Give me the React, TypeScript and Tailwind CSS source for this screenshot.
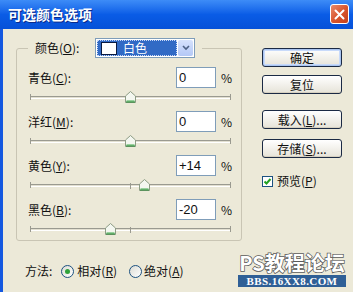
import React from 'react';

const FONT = '[font-family:"Noto_Sans_CJK_SC","Noto_Sans",sans-serif]';

interface SliderRowProps {
  name: string;
  hotkey: string;
  value: number;
  last?: boolean;
}

const Thumb: React.FC = () => (
  <svg width="11" height="12" viewBox="0 0 11 12">
    <path d="M5.5 0.5 L10.5 5 L10.5 11.5 L0.5 11.5 L0.5 5 Z" fill="#f4f7f0" stroke="#8c9c84" />
    <path d="M1.5 9.5 L9.5 9.5 L9.5 10.5 L1.5 10.5 Z" fill="#3fa84a" />
    <path d="M1 11 L10 11" stroke="#2a8a36" />
  </svg>
);

const SliderRow: React.FC<SliderRowProps> = ({ name, hotkey, value, last }) => {
  const text = value > 0 ? `+${value}` : `${value}`;
  return (
    <div className="flex flex-col">
      <div className="flex items-center h-[21px]">
        <span className="w-[148px] text-[12px] text-[#111]">
          {name}(<u>{hotkey}</u>):
        </span>
        <div className="w-[40px] h-[21px] bg-white border border-[#7f9db9] flex items-center pl-[2px] text-[13px] text-[#111] [font-family:Arial,'Liberation_Sans',sans-serif]">
          {text}
        </div>
        <span className="ml-[5px] text-[12px] text-[#111]">%</span>
      </div>
      <div className={`relative ml-[2px] w-[201px] ${last ? 'h-[20px]' : 'h-[23px]'}`}>
        <div className="absolute left-0 right-0 top-[8px] h-[3px] border-t border-[#9a9a90] border-b border-b-white bg-[#e2dfd0]" />
        <div className="absolute left-0 top-[6px] w-px h-[6px] bg-[#9a9a90]" />
        <div className="absolute right-0 top-[6px] w-px h-[6px] bg-[#9a9a90]" />
        {value !== 0 && <div className="absolute left-[100px] top-[7px] w-px h-[6px] bg-[#9a9a90]" />}
        <div className="absolute top-[3px]" style={{ left: 100 + value - 5 }}>
          <Thumb />
        </div>
      </div>
    </div>
  );
};

const XpButton: React.FC<{ children: React.ReactNode; primary?: boolean; className?: string }> = ({ children, primary, className }) => (
  <button
    className={`w-[80px] h-[19px] rounded-[3px] border border-[#1b2a44] bg-gradient-to-b from-white to-[#e6e3d8] flex items-center justify-center text-[12px] text-[#111] leading-none ${
      primary ? 'shadow-[inset_0_0_0_1px_#a9c4f0,inset_0_0_0_2px_#c8dafa]' : 'shadow-[inset_0_-1px_0_#d6d0c0]'
    } ${className ?? ''}`}
  >
    {children}
  </button>
);

const Radio: React.FC<{ checked?: boolean }> = ({ checked }) => (
  <span className="w-[13px] h-[13px] rounded-full border border-[#1c5180] bg-gradient-to-br from-[#dcdcd4] to-white flex items-center justify-center">
    {checked && <span className="w-[5px] h-[5px] rounded-full bg-[#2fa23a]" />}
  </span>
);

export default function App() {
  return (
    <div className={`w-[353px] h-[292px] overflow-hidden relative flex flex-col bg-[#ece9d8] ${FONT}`}>
      {/* title bar */}
      <div className="h-[29px] shrink-0 flex items-center justify-between pl-[8px] pr-[4px] bg-gradient-to-b from-[#3d8cf7] via-[#0a5ce6] to-[#0651d8]">
        <span className="text-white font-bold text-[14px] [text-shadow:1px_1px_0_#0a2a8a]">可选颜色选项</span>
        <div className="w-[19px] h-[20px] mt-[-1px] rounded-[3px] border border-white bg-gradient-to-br from-[#e98a6a] via-[#d9562e] to-[#c4401c] flex items-center justify-center">
          <svg width="11" height="11" viewBox="0 0 11 11">
            <path d="M1.5 1.5 L9.5 9.5 M9.5 1.5 L1.5 9.5" stroke="white" strokeWidth="2" strokeLinecap="round" />
          </svg>
        </div>
      </div>

      {/* body */}
      <div className="flex-1 flex border-l-[3px] border-l-[#1458e0] pl-[13px] pt-[9px]">
        <div className="w-[226px] flex flex-col">
          <fieldset className="border border-[#c9c5b4] rounded-[3px] pl-[11px] pr-[4px]">
            <legend className="px-[7px]">
              <div className="flex items-center h-[20px]">
                <span className="w-[60px] text-[12px] text-[#111]">
                  颜色(<u>O</u>):
                </span>
                <div className="w-[100px] h-[20px] border border-[#7f9db9] bg-white flex items-center p-[1px]">
                  <div className="flex-1 h-full bg-[#316ac5] border border-dotted border-[#c8d8f8] flex items-center pl-[3px]">
                    <span className="w-[16px] h-[13px] bg-white border border-[#0a1a40]" />
                    <span className="ml-[6px] text-[12px] text-white">白色</span>
                  </div>
                  <div className="w-[15px] h-full ml-[1px] bg-gradient-to-b from-[#d6e2fc] to-[#b4c8f6] rounded-[2px] flex items-center justify-center">
                    <svg width="8" height="6" viewBox="0 0 8 6">
                      <path d="M1 1 L4 4 L7 1" stroke="#4d6185" strokeWidth="1.6" fill="none" />
                    </svg>
                  </div>
                </div>
              </div>
            </legend>
            <div className="pt-[9px] flex flex-col">
              <SliderRow name="青色" hotkey="C" value={0} />
              <SliderRow name="洋红" hotkey="M" value={0} />
              <SliderRow name="黄色" hotkey="Y" value={14} />
              <SliderRow name="黑色" hotkey="B" value={-20} last />
            </div>
          </fieldset>

          <div className="mt-[22px] h-[16px] flex items-center ml-[9px] text-[12px] text-[#111]">
            <span>方法:</span>
            <span className="ml-[9px]"><Radio checked /></span>
            <span className="ml-[3px]">
              相对(<u>R</u>)
            </span>
            <span className="ml-[12px]"><Radio /></span>
            <span className="ml-[2px]">
              绝对(<u>A</u>)
            </span>
          </div>
        </div>

        <div className="ml-[20px] w-[80px] flex flex-col pt-[10px]">
          <XpButton primary>确定</XpButton>
          <XpButton className="mt-[8px]">复位</XpButton>
          <XpButton className="mt-[16px]">
            载入(<u>L</u>)...
          </XpButton>
          <XpButton className="mt-[10px]">
            存储(<u>S</u>)...
          </XpButton>
          <div className="mt-[14px] flex items-center text-[12px] text-[#111]">
            <span className="w-[11px] h-[11px] border border-[#1c5180] bg-white flex items-center justify-center">
              <svg width="9" height="9" viewBox="0 0 9 9">
                <path d="M1.5 4.5 L3.5 6.5 L7.5 2" stroke="#21a121" strokeWidth="2" fill="none" />
              </svg>
            </span>
            <span className="ml-[4px]">
              预览(<u>P</u>)
            </span>
          </div>
        </div>
      </div>

      {/* watermark overlay */}
      <div className="absolute left-[238px] top-[251px] w-[108px] flex flex-col items-center">
        <div className="h-[23px] leading-[23px] text-[20px] font-bold text-white [-webkit-text-stroke:1.5px_#5a5a5a] [paint-order:stroke_fill]">
          PS教程论坛
        </div>
        <div className="mt-[1px] w-full h-[12px] bg-[#2f5f96] text-white font-bold text-[11px] leading-[12px] text-center tracking-[0.4px] [font-family:'Liberation_Serif',serif]">
          BBS.16XX8.COM
        </div>
      </div>
    </div>
  );
}
